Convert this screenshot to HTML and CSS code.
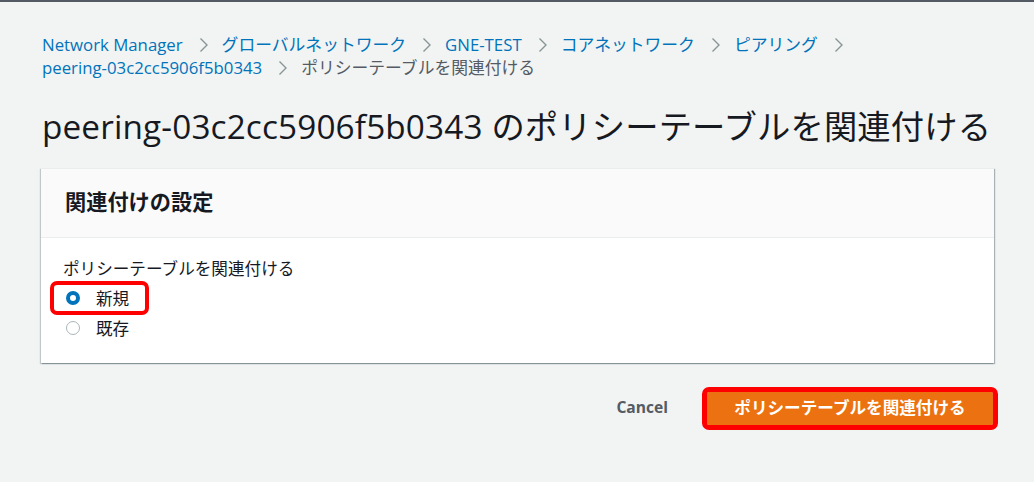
FILE: index.html
```html
<!DOCTYPE html>
<html lang="ja">
<head>
<meta charset="utf-8">
<title>ポリシーテーブルを関連付ける</title>
<link rel="stylesheet" href="styles.css">
</head>
<body>
<main class="page">
  <nav class="crumbs">
    <a class="crumb">Network Manager</a>
    <svg class="chev" viewBox="0 0 10 16"><path d="M2 1.5 L8.5 8 L2 14.5"/></svg>
    <a class="crumb">グローバルネットワーク</a>
    <svg class="chev" viewBox="0 0 10 16"><path d="M2 1.5 L8.5 8 L2 14.5"/></svg>
    <a class="crumb">GNE-TEST</a>
    <svg class="chev" viewBox="0 0 10 16"><path d="M2 1.5 L8.5 8 L2 14.5"/></svg>
    <a class="crumb">コアネットワーク</a>
    <svg class="chev" viewBox="0 0 10 16"><path d="M2 1.5 L8.5 8 L2 14.5"/></svg>
    <a class="crumb">ピアリング</a>
    <svg class="chev" viewBox="0 0 10 16"><path d="M2 1.5 L8.5 8 L2 14.5"/></svg>
    <span class="break"></span>
    <a class="crumb">peering-03c2cc5906f5b0343</a>
    <svg class="chev" viewBox="0 0 10 16"><path d="M2 1.5 L8.5 8 L2 14.5"/></svg>
    <span class="crumb current">ポリシーテーブルを関連付ける</span>
  </nav>

  <h1 class="title">peering-03c2cc5906f5b0343 のポリシーテーブルを関連付ける</h1>

  <section class="card">
    <div class="card-head">
      <h2>関連付けの設定</h2>
    </div>
    <div class="card-body">
      <div class="field-label">ポリシーテーブルを関連付ける</div>
      <div class="radios">
        <label class="radio highlight">
          <span class="dot checked"></span>
          <span>新規</span>
        </label>
        <label class="radio">
          <span class="dot"></span>
          <span>既存</span>
        </label>
      </div>
    </div>
  </section>

  <div class="actions">
    <button class="btn-link">Cancel</button>
    <button class="btn-primary">ポリシーテーブルを関連付ける</button>
  </div>
</main>
</body>
</html>
```

FILE: styles.css
```css
* { box-sizing: border-box; }

html, body {
  margin: 0;
  padding: 0;
}

body {
  background: #f2f3f3;
  border-top: 2px solid #545b64;
  font-family: "Open Sans", "Noto Sans CJK JP", sans-serif;
  color: #16191f;
  height: 482px;
  overflow: hidden;
}

.page {
  padding: 31px 40px 0 41px;
  display: flex;
  flex-direction: column;
}

.crumbs {
  display: flex;
  flex-wrap: wrap;
  align-items: center;
  font-size: 16.8px;
  line-height: 23px;
  padding-left: 1px;
}

.crumb {
  color: #0073bb;
  text-decoration: none;
}

.crumb.current {
  color: #545b64;
}

.chev {
  width: 11px;
  height: 16px;
  margin: 0 13px 0 15px;
}

.chev path {
  fill: none;
  stroke: #879596;
  stroke-width: 1.4;
}

.break {
  flex-basis: 100%;
  height: 0;
}

.title {
  margin: 27px 0 0 1px;
  font-size: 33.3px;
  line-height: 40px;
  font-weight: 400;
  letter-spacing: 0.15px;
  color: #16191f;
  white-space: nowrap;
}

.card {
  margin-top: 22px;
  background: #fff;
  border-top: 1px solid #eaeded;
  box-shadow: 1px 1px 1px 0 rgba(0, 28, 36, 0.3), -1px 1px 1px 0 rgba(0, 28, 36, 0.2);
}

.card-head {
  background: #fafafa;
  border-bottom: 1px solid #eaeded;
  height: 69px;
  display: flex;
  align-items: center;
  padding: 0 24px 2px 24px;
}

.card-head h2 {
  margin: 0;
  font-size: 21.2px;
  font-weight: 700;
  line-height: 28px;
  color: #16191f;
}

.card-body {
  padding: 20px 22px 22px 22px;
}

.field-label {
  font-size: 16.6px;
  line-height: 22px;
  color: #16191f;
}

.radios {
  display: flex;
  flex-direction: column;
  align-items: flex-start;
  gap: 4px;
  margin-top: 5px;
}

.radio {
  display: inline-flex;
  align-items: center;
  gap: 16px;
  height: 26px;
  margin-left: -9px;
  padding: 0 16px 0 12px;
  font-size: 16.6px;
  color: #16191f;
}

.radio.highlight {
  outline: 4px solid #ff0000;
  border-radius: 3px;
}

.dot {
  width: 14px;
  height: 14px;
  border-radius: 50%;
  border: 1.5px solid #aab7b8;
  background: #fff;
}

.dot.checked {
  border: 4px solid #0073bb;
}

.actions {
  display: flex;
  justify-content: flex-end;
  align-items: center;
  margin-top: 29px;
  gap: 39px;
  padding-right: 1px;
}

.btn-link {
  background: none;
  border: none;
  padding: 0;
  font-family: inherit;
  font-size: 15.6px;
  font-weight: 700;
  color: #545b64;
  margin-top: -4px;
}

.btn-primary {
  width: 286px;
  height: 33px;
  background: #ec7211;
  border: none;
  outline: 5px solid #ff0000;
  border-radius: 2px;
  color: #fff;
  font-family: inherit;
  font-size: 16.6px;
  font-weight: 700;
  padding: 0 0 4px 0;
}
```
